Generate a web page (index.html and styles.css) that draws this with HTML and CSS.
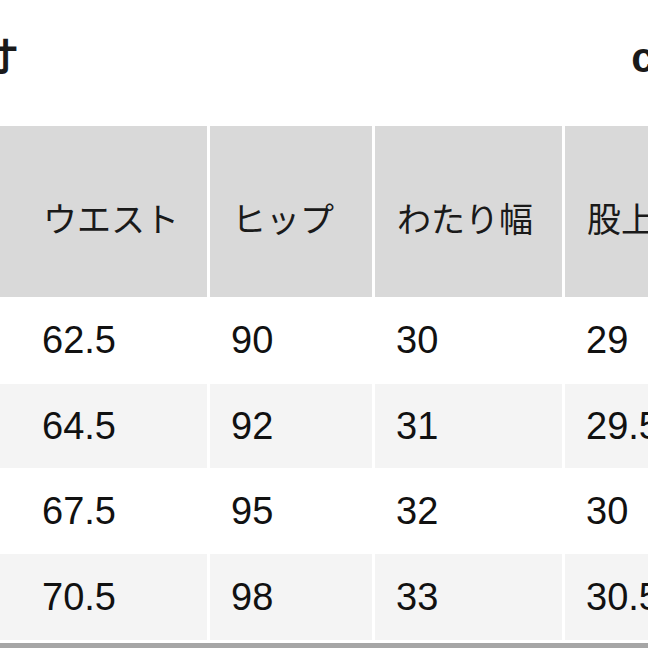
FILE: index.html
```html
<!DOCTYPE html>
<html lang="ja">
<head>
<meta charset="utf-8">
<link rel="stylesheet" href="styles.css">
</head>
<body>
<div class="page">
  <div class="titlebar">
    <div class="title">実寸</div>
    <div class="unit">cm</div>
  </div>
  <div class="table">
    <div class="cell hd"></div>
    <div class="cell hd">ウエスト</div>
    <div class="cell hd">ヒップ</div>
    <div class="cell hd">わたり幅</div>
    <div class="cell hd">股上</div>

    <div class="cell w"></div>
    <div class="cell w num">62.5</div>
    <div class="cell w num">90</div>
    <div class="cell w num">30</div>
    <div class="cell w num">29</div>

    <div class="cell g"></div>
    <div class="cell g num">64.5</div>
    <div class="cell g num">92</div>
    <div class="cell g num">31</div>
    <div class="cell g num">29.5</div>

    <div class="cell w"></div>
    <div class="cell w num">67.5</div>
    <div class="cell w num">95</div>
    <div class="cell w num">32</div>
    <div class="cell w num">30</div>

    <div class="cell g"></div>
    <div class="cell g num">70.5</div>
    <div class="cell g num">98</div>
    <div class="cell g num">33</div>
    <div class="cell g num">30.5</div>
  </div>
  <div class="rule"></div>
</div>
</body>
</html>
```
FILE: styles.css
```css
html, body {
  margin: 0;
  padding: 0;
  background: #ffffff;
  width: 648px;
  height: 648px;
  overflow: hidden;
}
.page {
  width: 648px;
  height: 648px;
  overflow: hidden;
  font-family: "Noto Sans CJK JP", "Noto Sans", sans-serif;
  color: #1a1a1a;
}
.titlebar {
  height: 126px;
  display: flex;
  justify-content: space-between;
  align-items: center;
  padding-bottom: 16px;
  box-sizing: border-box;
}
.title {
  font-size: 37px;
  font-weight: 700;
  margin-left: -56px;
  line-height: 1;
  white-space: nowrap;
}
.unit {
  font-family: "Liberation Sans", "Noto Sans", sans-serif;
  font-size: 42px;
  font-weight: 700;
  margin-right: -44px;
  line-height: 1;
  white-space: nowrap;
  padding-top: 6px;
}
.table {
  display: grid;
  grid-template-columns: 18px 186px 162px 187px 200px;
  grid-template-rows: 171px 85px 84px 84px 86px;
  column-gap: 3px;
  row-gap: 1px;
  width: 780px;
}
.cell {
  display: flex;
  align-items: center;
  padding-left: 22px;
  font-size: 34px;
  white-space: nowrap;
  overflow: hidden;
}
.cell.num {
  font-family: "Liberation Sans", "Noto Sans", sans-serif;
  font-size: 38px;
  padding-left: 21px;
  color: #111111;
}
.cell.hd {
  background: #d9d9d9;
  padding-top: 12px;
}
.cell.w {
  background: #ffffff;
}
.cell.g {
  background: #f4f4f4;
}
.rule {
  margin-top: 3px;
  height: 5px;
  background: #a6a6a6;
}
```
